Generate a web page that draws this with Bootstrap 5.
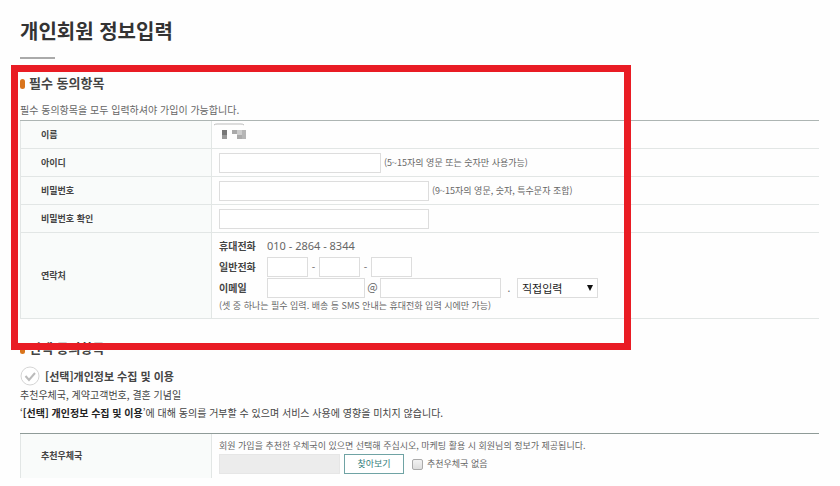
<!DOCTYPE html>
<html lang="ko">
<head>
<meta charset="utf-8">
<meta name="viewport" content="width=device-width, initial-scale=1">
<title>개인회원 정보입력</title>
<link rel="stylesheet" href="https://cdn.jsdelivr.net/npm/bootstrap@5.3.0/dist/css/bootstrap.min.css">
<style>
  body { font-family: "Noto Sans CJK KR", sans-serif; font-size: 10px; line-height: 16px; color: #666; background: #fefefe; }
  .page { padding: 16px 21px 0 20px; }
  .page-title { font-size: 20px; line-height: 30px; font-weight: 700; color: #333; }
  .title-rule { width: 35px; height: 2px; margin-top: 11px; background: #aaa; }
  .section-title { font-size: 13px; line-height: 20px; font-weight: 700; color: #444; gap: 4px; }
  .bullet { width: 5px; height: 10px; border-radius: 3px; background: #d9741c; margin-top: 2px; }
  .required { margin-top: 14px; }
  .intro { margin-top: 9px; padding-bottom: 2px; }
  .highlight { left: -9px; top: -8px; bottom: -31px; width: 77.6%; border: 7px solid #e91c24; z-index: 2; pointer-events: none; }
  .form-grid { width: 100%; table-layout: fixed; border-top: 1px solid #adb5b3; border-collapse: separate; border-spacing: 0; }
  .form-grid th { width: 192px; padding: 0 20px; font-size: 9px; color: #444; background: #f9fbfa; border: solid #e2e6e5; border-width: 0 1px 1px 1px; }
  .form-grid td { height: 28px; padding: 0 7px; border-bottom: 1px solid #e2e6e5; }
  .form-grid .open-row > * { border-bottom: 0; }
  .field { height: 20px; padding: 0 4px; border: 1px solid #ddd; border-radius: 0; background: #fff; font-size: 10px; color: #444; }
  .w-id { width: 162px; } .w-pw { width: 210px; } .w-tel { width: 41px; } .w-mail { width: 98px; } .w-host { width: 121px; } .w-pick { width: 81px; }
  .w-office { width: 121px; background: #ececec; border-color: #e6e6e6; }
  .hint { margin-left: 3px; }
  .note { font-size: 9px; }
  .contact-label { width: 48px; font-weight: 700; color: #444; }
  .contact { padding: 2px 0 4px; }
  .contact-line { height: 21px; }
  .phone { font-family: "Noto Sans", sans-serif; font-size: 11px; }
  .dash { width: 11px; text-align: center; }
  .at { width: 15px; text-align: center; font-size: 11px; line-height: 20px; padding-bottom: 3px; }
  .dot { width: 16px; text-align: center; }
  .picker { appearance: none; width: 100%; font-size: 11px; color: #222; }
  .arrow { right: 5px; top: 7px; }
  .optional { margin-top: 19px; }
  .agree { margin-top: 8px; gap: 5px; font-size: 11px; font-weight: 700; color: #444; }
  .body-text { line-height: 18px; color: #444; }
  .body-text strong { color: #222; }
  .office-grid { margin-top: 11px; border-top-color: #8f9b98; }
  .find-btn { width: 60px; height: 20px; padding: 0; border: 1px solid #6fa3a4; border-radius: 0; font-size: 9px; line-height: 16px; color: #35807d; background: #fff; }
  .tick { appearance: none; width: 11px; height: 11px; border: 1px solid #aaa; border-radius: 2px; background: linear-gradient(#f2f2f2, #ddd); }
</style>
</head>
<body>
<main class="page">
  <h1 class="page-title mb-0">개인회원 정보입력</h1>
  <div class="title-rule"></div>

  <section class="required position-relative">
    <div class="highlight position-absolute"></div>
    <h2 class="section-title d-flex align-items-center mb-0"><span class="bullet"></span>필수 동의항목</h2>
    <p class="intro mb-0">필수 동의항목을 모두 입력하셔야 가입이 가능합니다.</p>
    <table class="form-grid">
      <tr>
        <th scope="row">이름</th>
        <td>
          <svg class="d-block overflow-visible" width="36" height="20" viewBox="0 0 36 20" aria-hidden="true">
            <path d="M-5 0Q-4-1-2-1H22Q24-1 25 0" fill="none" stroke="#bbb"/>
            <rect x="3" y="5" width="5" height="5" fill="#777"/><rect x="3" y="10" width="5" height="4" fill="#999"/>
            <rect x="13" y="5" width="5" height="4" fill="#aaa"/><rect x="18" y="5" width="5" height="5" fill="#ccc"/><rect x="23" y="5" width="4" height="9" fill="#b5b5b5"/><rect x="18" y="10" width="5" height="4" fill="#aaa"/>
          </svg>
        </td>
      </tr>
      <tr>
        <th scope="row"><label for="uid">아이디</label></th>
        <td><div class="d-flex align-items-center"><input id="uid" type="text" class="field w-id"><span class="note hint">(5~15자의 영문 또는 숫자만 사용가능)</span></div></td>
      </tr>
      <tr>
        <th scope="row"><label for="pw">비밀번호</label></th>
        <td><div class="d-flex align-items-center"><input id="pw" type="password" class="field w-pw"><span class="note hint">(9~15자의 영문, 숫자, 특수문자 조합)</span></div></td>
      </tr>
      <tr>
        <th scope="row"><label for="pw2">비밀번호 확인</label></th>
        <td><div class="d-flex align-items-center"><input id="pw2" type="password" class="field w-pw"></div></td>
      </tr>
      <tr>
        <th scope="row">연락처</th>
        <td>
          <div class="contact">
            <div class="contact-line d-flex align-items-center"><span class="contact-label">휴대전화</span><span class="phone">010 - 2864 - 8344</span></div>
            <div class="contact-line d-flex align-items-center">
              <label class="contact-label" for="tel1">일반전화</label>
              <input id="tel1" type="text" class="field w-tel"><span class="dash">-</span><input type="text" class="field w-tel" aria-label="일반전화 가운데 자리"><span class="dash">-</span><input type="text" class="field w-tel" aria-label="일반전화 끝자리">
            </div>
            <div class="contact-line d-flex align-items-center">
              <label class="contact-label" for="mail">이메일</label>
              <input id="mail" type="text" class="field w-mail"><span class="at">@</span><input type="text" class="field w-host" aria-label="이메일 도메인"><span class="dot">.</span>
              <div class="w-pick position-relative">
                <select class="field picker d-block" aria-label="도메인 선택"><option>직접입력</option></select>
                <svg class="arrow position-absolute" width="6" height="6" viewBox="0 0 6 6" aria-hidden="true"><path d="M0 0h6L3 6z" fill="#111"/></svg>
              </div>
            </div>
            <div class="note">(셋 중 하나는 필수 입력. 배송 등 SMS 안내는 휴대전화 입력 시에만 가능)</div>
          </div>
        </td>
      </tr>
    </table>
  </section>

  <section class="optional">
    <h2 class="section-title d-flex align-items-center mb-0"><span class="bullet"></span>선택 동의항목</h2>
    <label class="agree d-flex align-items-center">
      <input type="checkbox" class="visually-hidden">
      <svg width="20" height="20" viewBox="0 0 20 20" fill="none" aria-hidden="true"><circle cx="10" cy="10" r="9" fill="#fff" stroke="#d5d5d5"/><path d="M5.500 10l3.500 4 6-7" stroke="#bbb" stroke-width="2"/></svg>
      <span>[선택]개인정보 수집 및 이용</span>
    </label>
    <p class="body-text mb-0">추천우체국, 계약고객번호, 결혼 기념일<br>‘<strong>[선택] 개인정보 수집 및 이용</strong>’에 대해 동의를 거부할 수 있으며 서비스 사용에 영향을 미치지 않습니다.</p>
    <table class="form-grid office-grid">
      <tr class="open-row">
        <th scope="row"><label for="office">추천우체국</label></th>
        <td>
          <div class="note pt-1">회원 가입을 추천한 우체국이 있으면 선택해 주십시오, 마케팅 활용 시 회원님의 정보가 제공됩니다.</div>
          <div class="d-flex align-items-center pb-1">
            <input id="office" type="text" class="field w-office" readonly>
            <button type="button" class="btn find-btn ms-1">찾아보기</button>
            <label class="note d-flex align-items-center gap-1 ms-2"><input type="checkbox" class="tick">추천우체국 없음</label>
          </div>
        </td>
      </tr>
    </table>
  </section>
</main>
<script src="https://cdn.jsdelivr.net/npm/bootstrap@5.3.0/dist/js/bootstrap.bundle.min.js"></script>
</body>
</html>
